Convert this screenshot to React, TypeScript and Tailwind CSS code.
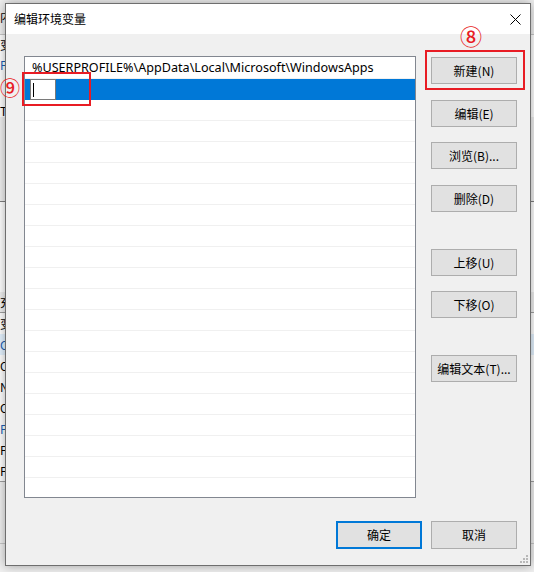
import React from 'react';

const FONT = '"Noto Sans CJK SC", "Liberation Sans", sans-serif';
const LIST_FONT = '"Noto Sans", "Noto Sans CJK SC", sans-serif';

const paths = ['%USERPROFILE%\\AppData\\Local\\Microsoft\\WindowsApps'];

const sideButtons = [
  { label: '新建(N)', mt: 'mt-[1px]' },
  { label: '编辑(E)', mt: 'mt-[16px]' },
  { label: '浏览(B)...', mt: 'mt-[15px]' },
  { label: '删除(D)', mt: 'mt-[16px]' },
  { label: '上移(U)', mt: 'mt-[37px]' },
  { label: '下移(O)', mt: 'mt-[15px]' },
  { label: '编辑文本(T)...', mt: 'mt-[37px]' },
];

const btn =
  'flex items-center justify-center w-[86px] bg-[#e1e1e1] text-[12px] leading-none text-black';

// the window behind the dialog, only a few pixels of it show
const BackWindow: React.FC = () => (
  <div className="flex flex-col w-full h-full bg-[#f0f0f0] text-[12px] leading-none text-black">
    <div className="h-[34px] flex items-center">内</div>
    <div className="h-[1px] bg-[#c8c8c8]" />
    <div className="flex flex-col bg-white w-full">
      <div className="h-[20px] flex items-center">变</div>
      <div className="h-[19px] flex items-center text-[#1a5fb4]">Pa</div>
      <div className="h-[31px]" />
      <div className="h-[12px] flex items-center">TM</div>
    </div>
    <div className="h-[84px]" />
    <div className="h-[1px] bg-[#808080]" />
    <div className="h-[90px] bg-white" />
    <div className="h-[20px] flex items-center">充</div>
    <div className="h-[1px] bg-[#a0a0a0]" />
    <div className="flex flex-col bg-white">
      <div className="h-[21px] flex items-center">变</div>
      <div className="h-[21px] flex items-center bg-[#e5f3ff] text-[#1a5fb4]">Co</div>
      <div className="h-[21px] flex items-center">Or</div>
      <div className="h-[21px] flex items-center">NI</div>
      <div className="h-[21px] flex items-center">OS</div>
      <div className="h-[21px] flex items-center text-[#1a5fb4]">Pa</div>
      <div className="h-[21px] flex items-center">PA</div>
      <div className="h-[21px] flex items-center">PR</div>
    </div>
    <div className="h-[1px] bg-[#a0a0a0]" />
    <div className="h-[61px]" />
    <div className="h-[1px] bg-[#c8c8c8]" />
  </div>
);

const ResizeGrip: React.FC = () => (
  <svg width="8" height="8" viewBox="0 0 8 8" className="absolute right-[2px] bottom-[2px]">
    <rect x="6" y="0" width="2" height="2" fill="#b8b8b8" />
    <rect x="3" y="3" width="2" height="2" fill="#b8b8b8" />
    <rect x="6" y="3" width="2" height="2" fill="#b8b8b8" />
    <rect x="0" y="6" width="2" height="2" fill="#b8b8b8" />
    <rect x="3" y="6" width="2" height="2" fill="#b8b8b8" />
    <rect x="6" y="6" width="2" height="2" fill="#b8b8b8" />
  </svg>
);

const App: React.FC = () => {
  return (
    <div
      className="relative w-[534px] h-[572px] overflow-hidden bg-[#f0f0f0]"
      style={{ fontFamily: FONT }}
    >
      <BackWindow />

      {/* dialog */}
      <div className="absolute left-[5px] top-[3px] w-[526px] h-[563px] flex flex-col border border-[#6e6e6e] bg-[#f0f0f0] shadow-[0_0_10px_rgba(0,0,0,0.35)]">
        <div className="h-[30px] flex items-center justify-between bg-white pl-[8px] pr-[9px]">
          <span className="text-[12px] leading-none text-black">编辑环境变量</span>
          <svg width="11" height="11" viewBox="0 0 11 11">
            <path d="M0.5 0.5 L10.5 10.5 M10.5 0.5 L0.5 10.5" stroke="#000" strokeWidth="1" />
          </svg>
        </div>

        <div className="flex flex-col pl-[18px] pr-[13px] pt-[22px]">
          <div className="flex">
            <div className="w-[392px] h-[442px] border border-[#828790] bg-white pt-[1px] overflow-hidden">
              {paths.map((p) => (
                <div
                  key={p}
                  className="h-[21px] flex items-center pl-[7px] border-b border-[#f0f0f0] text-[12.6px] leading-none text-black"
                  style={{ fontFamily: LIST_FONT }}
                >
                  {p}
                </div>
              ))}
              <div className="h-[21px] flex items-stretch bg-[#0078d7] border-b border-[#0078d7]">
                <div className="ml-[5px] w-[26px] border border-[#7a7a7a] bg-white flex items-center pl-[2px] -mb-[1px]">
                  <div className="w-[1px] h-[14px] bg-black" />
                </div>
              </div>
              {Array.from({ length: 18 }).map((_, i) => (
                <div key={i} className="h-[21px] border-b border-[#f0f0f0]" />
              ))}
            </div>

            <div className="flex flex-col ml-[15px]">
              {sideButtons.map((b) => (
                <div key={b.label} className={`${btn} h-[27px] border border-[#adadad] ${b.mt}`}>
                  {b.label}
                </div>
              ))}
            </div>
          </div>

          <div className="flex justify-end gap-[9px] mt-[23px]">
            <div className={`${btn} h-[28px] border-2 border-[#0078d7]`}>确定</div>
            <div className={`${btn} h-[28px] border border-[#adadad]`}>取消</div>
          </div>
        </div>

        <ResizeGrip />
      </div>

      {/* annotations */}
      <div className="absolute left-[425px] top-[50px] w-[100px] h-[40px] border-2 border-[#e81c24]" />
      <div className="absolute left-[460px] top-[24px] text-[22px] leading-none font-medium text-[#e81c24]">⑧</div>
      <div className="absolute left-[22px] top-[72px] w-[69px] h-[34px] border-2 border-[#e81c24]" />
      <div className="absolute left-[0px] top-[78px] text-[20px] leading-none font-medium text-[#e81c24]">⑨</div>
    </div>
  );
};

export default App;
